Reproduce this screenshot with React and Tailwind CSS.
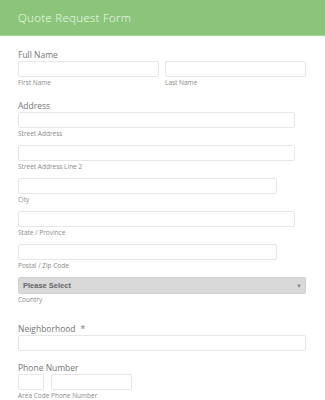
import React from 'react';

const Input = ({ w }) => (
  <div className={`${w} h-[16px] border border-[#e6e6e6] rounded-[2px] bg-white`} />
);

const Sub = ({ children }) => (
  <div className="h-[12px] leading-[12px] text-[6.5px] text-[#8a8a8a] whitespace-nowrap">{children}</div>
);

const Label = ({ children }) => (
  <div className="h-[12px] leading-[12px] text-[8.5px] text-[#757575]">{children}</div>
);

const SubField = ({ w, label }) => (
  <div className="mb-[5px]">
    <Input w={w} />
    <Sub>{label}</Sub>
  </div>
);

export default function App() {
  return (
    <div className="w-[325px] h-[400px] overflow-hidden bg-white" style={{ fontFamily: '"Open Sans", sans-serif' }}>
      {/* header */}
      <div className="h-[36px] bg-[#8bc57a] border-b border-[#a6d597] flex items-center pl-[18px]">
        <span className="text-[#f4faf2] text-[11.5px] font-light tracking-[0.3px]" style={{ fontFamily: '"Open Sans", sans-serif' }}>
          Quote Request Form
        </span>
      </div>

      <div className="pl-[18px] pt-[13px]">
        {/* full name */}
        <Label>Full Name</Label>
        <div className="flex gap-[6px]">
          <div>
            <Input w="w-[141px]" />
            <Sub>First Name</Sub>
          </div>
          <div>
            <Input w="w-[141px]" />
            <Sub>Last Name</Sub>
          </div>
        </div>

        {/* address */}
        <div className="mt-[11px]">
          <Label>Address</Label>
          <SubField w="w-[277px]" label="Street Address" />
          <SubField w="w-[277px]" label="Street Address Line 2" />
          <SubField w="w-[259px]" label="City" />
          <SubField w="w-[277px]" label="State / Province" />
          <SubField w="w-[259px]" label="Postal / Zip Code" />
          <div className="w-[288px] h-[17px] bg-[#d9d9d9] border border-[#d0d0d0] rounded-[2px] flex items-center justify-between pl-[4px] pr-[3px]">
            <span className="text-[7.5px] font-semibold text-[#666]" style={{ fontFamily: '"Liberation Sans", sans-serif' }}>
              Please Select
            </span>
            <span className="text-[6px] text-[#8a8a8a] leading-none">▼</span>
          </div>
          <Sub>Country</Sub>
        </div>

        {/* neighborhood */}
        <div className="mt-[17px]">
          <Label>
            Neighborhood<span className="ml-[5px]">*</span>
          </Label>
          <Input w="w-[288px]" />
        </div>

        {/* phone */}
        <div className="mt-[11px]">
          <Label>Phone Number</Label>
          <div className="flex gap-[7px]">
            <div className="w-[26px]">
              <Input w="w-[26px]" />
              <Sub>Area Code</Sub>
            </div>
            <div>
              <Input w="w-[81px]" />
              <Sub>Phone Number</Sub>
            </div>
          </div>
        </div>
      </div>
    </div>
  );
}
